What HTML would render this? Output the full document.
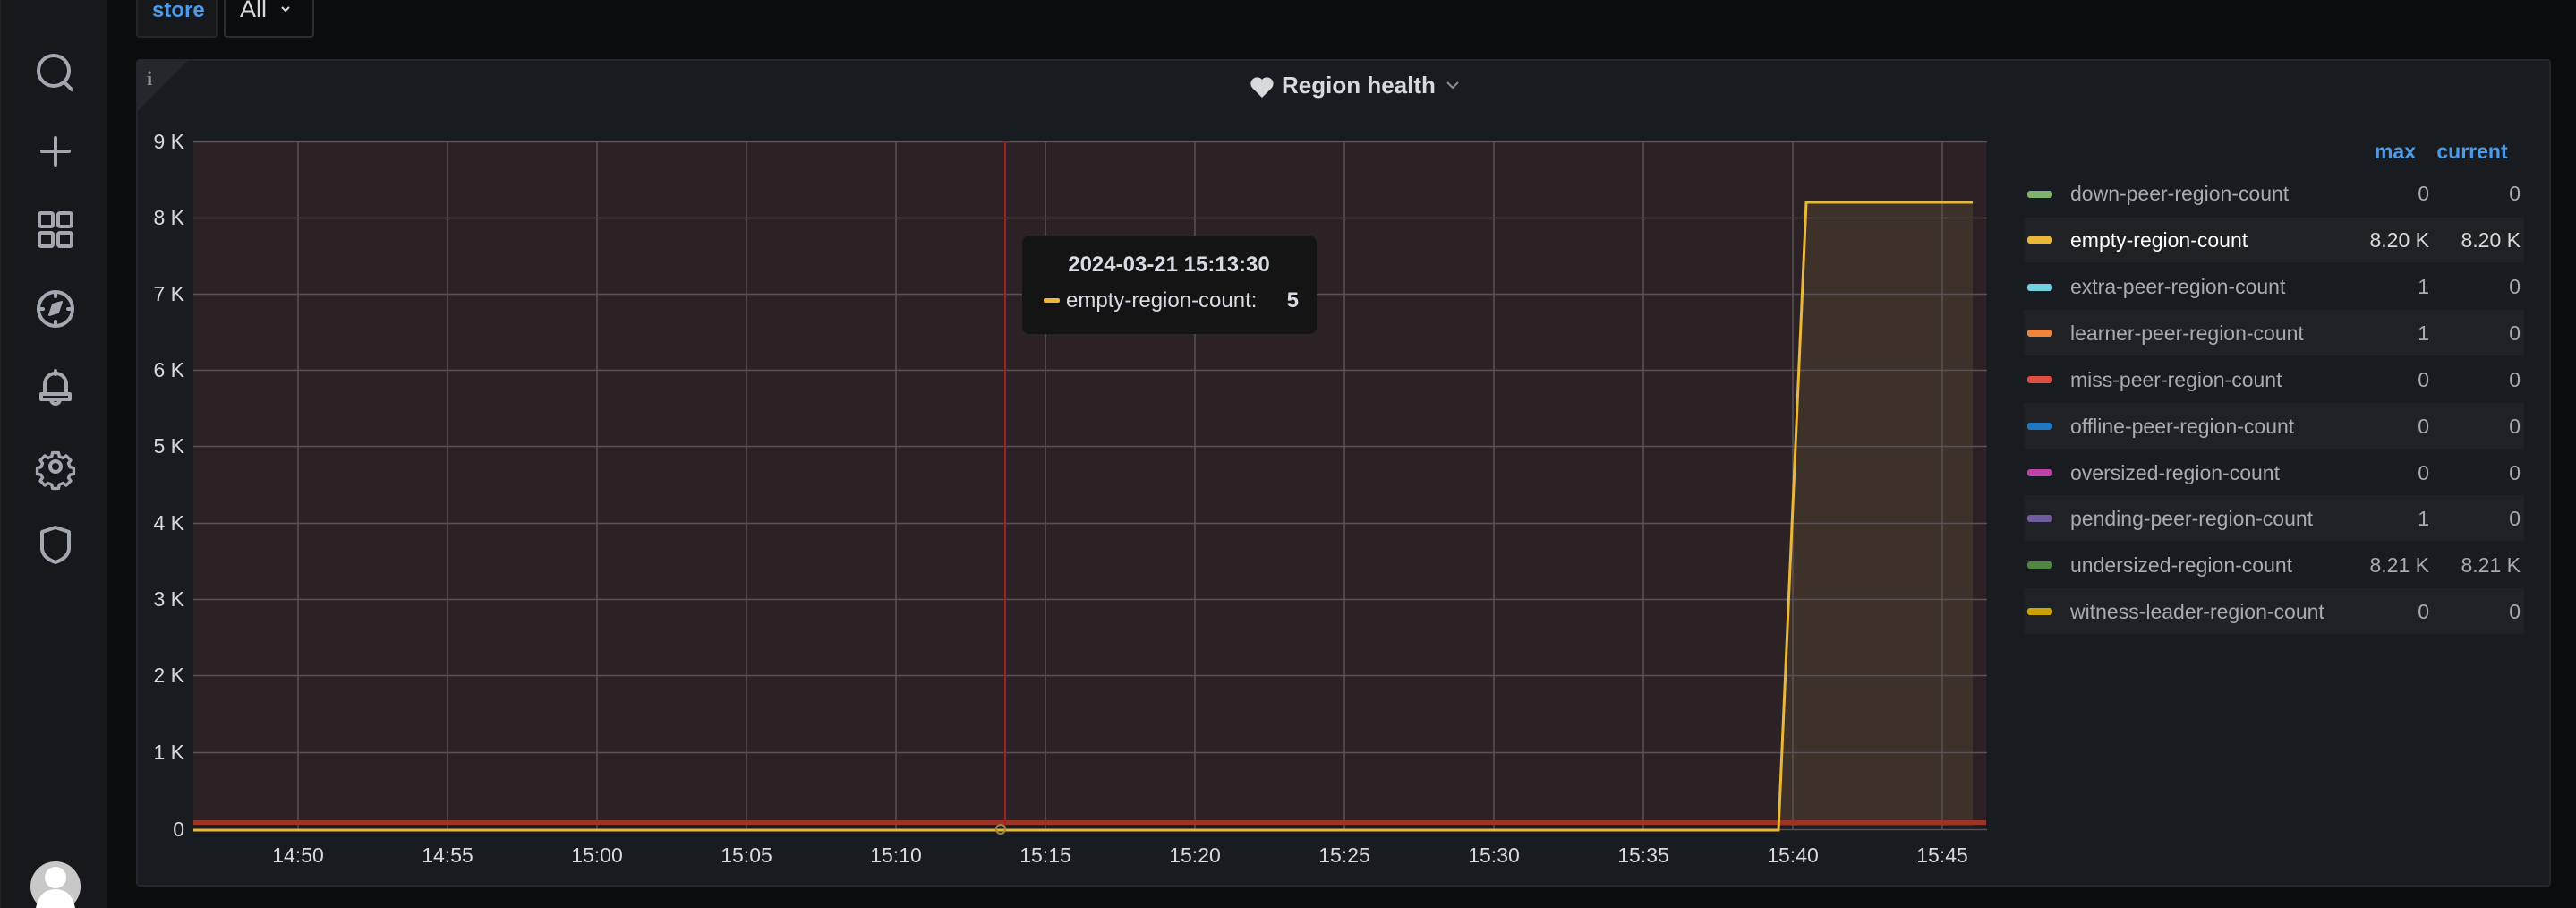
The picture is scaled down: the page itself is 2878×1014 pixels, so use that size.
<!DOCTYPE html>
<html><head><meta charset="utf-8"><style>
html,body{margin:0;padding:0;background:#0b0c0e;width:2878px;height:1014px;overflow:hidden;font-family:"Liberation Sans",sans-serif}
svg{position:absolute;left:0;top:0}
</style></head><body>
<svg width="2878" height="1014" viewBox="0 0 2878 1014" xmlns="http://www.w3.org/2000/svg" font-family="Liberation Sans, sans-serif">
<rect x="0" y="0" width="2878" height="1014" fill="#0b0c0e"/>
<rect x="0" y="0" width="120" height="1014" fill="#16181c"/>
<rect x="0" y="0" width="1" height="1014" fill="#222"/>
<g fill="none" stroke="#a3a7b0" stroke-width="4" stroke-linecap="round" stroke-linejoin="round">
 <circle cx="60" cy="79" r="17"/><line x1="72" y1="92" x2="80" y2="100"/>
 <line x1="62" y1="154" x2="62" y2="184"/><line x1="47" y1="169" x2="77" y2="169"/>
 <rect x="44" y="238" width="15" height="15" rx="2"/><rect x="65" y="238" width="15" height="15" rx="2"/>
 <rect x="44" y="260" width="15" height="15" rx="2"/><rect x="65" y="260" width="15" height="15" rx="2"/>
 <circle cx="62" cy="345" r="19"/><line x1="62" y1="326" x2="62" y2="331"/><line x1="62" y1="359" x2="62" y2="364"/><line x1="43" y1="345" x2="48" y2="345"/><line x1="76" y1="345" x2="81" y2="345"/>
 <path d="M55 352 L59 340 L69 337 L65 349 Z" fill="#a3a7b0" stroke-width="2"/>
 <path d="M62 414 L62 418 M50 440 L50 429 A12 12 0 0 1 74 429 L74 440 M46 440 L78 440 L78 446 L46 446 Z M57 446 A5 5 0 0 0 67 446"/>
 <circle cx="62" cy="521" r="6"/>
 <path d="M58 502 L66 502 L67 507 L72 509 L76 506 L82 512 L79 516 L81 521 L81 521 L86 522 L86 530 L81 531 L79 535 L82 539 L76 545 L72 542 L67 544 L66 549 L58 549 L57 544 L52 542 L48 545 L42 539 L45 535 L43 531 L38 530 L38 522 L43 521 L45 516 L42 512 L48 506 L52 509 L57 507 Z" transform="translate(62 525.5) scale(0.85) translate(-62 -525.5)"/>
 <path d="M47 594 L62 589 L77 594 L77 613 Q76 623 62 628 Q48 623 47 613 Z"/>
</g>
<circle cx="62" cy="990" r="28" fill="#c8c8c8"/>
<circle cx="62" cy="980" r="12" fill="#fff"/>
<path d="M40 1014 Q44 993 62 993 Q80 993 84 1014 Z" fill="#fff"/>
<rect x="153" y="-4" width="89" height="45" rx="3" fill="#16181c" stroke="#24262b" stroke-width="2"/>
<text x="170" y="19" font-size="24" font-weight="600" fill="#4c9be8">store</text>
<rect x="251" y="-4" width="99" height="45" rx="3" fill="#0b0c0e" stroke="#2c3032" stroke-width="2"/>
<text x="268" y="19" font-size="27" fill="#d8d9da">All</text>
<path d="M315 8 L319 12 L323 8" stroke="#d8d9da" stroke-width="2" fill="none"/>
<rect x="153" y="67" width="2696" height="922" rx="3" fill="#181b1f" stroke="#24262b" stroke-width="2"/>
<path d="M154 68 L210 68 L154 124 Z" fill="#25272c"/>
<text x="164" y="95" font-size="22" font-weight="bold" fill="#8e8e8e" font-family="Liberation Serif, serif">i</text>
<path d="M1410 109 L1399 98 A6.5 6.5 0 0 1 1410 89 A6.5 6.5 0 0 1 1421 98 Z" fill="#d8d9da"/>
<text x="1432" y="104" font-size="26" font-weight="bold" fill="#d8d9da">Region health</text>
<path d="M1617 92 L1623 98 L1629 92" stroke="#8e8e8e" stroke-width="2" fill="none"/>
<rect x="216" y="158" width="2003" height="764" fill="#2c2225"/>
<path d="M1987 922 L2018 226 L2204 226 L2204 922 Z" fill="#3d3129"/>
<g stroke="#5a5254" stroke-width="1.5">
 <line x1="216" y1="158.5" x2="2220" y2="158.5"/>
 <line x1="216" y1="243.5" x2="2220" y2="243.5"/>
 <line x1="216" y1="328.5" x2="2220" y2="328.5"/>
 <line x1="216" y1="413.5" x2="2220" y2="413.5"/>
 <line x1="216" y1="498.5" x2="2220" y2="498.5"/>
 <line x1="216" y1="584.5" x2="2220" y2="584.5"/>
 <line x1="216" y1="669.5" x2="2220" y2="669.5"/>
 <line x1="216" y1="754.5" x2="2220" y2="754.5"/>
 <line x1="216" y1="840.5" x2="2220" y2="840.5"/>
 <line x1="216" y1="926.5" x2="2220" y2="926.5"/>
 <line x1="333" y1="158" x2="333" y2="926"/><line x1="500" y1="158" x2="500" y2="926"/>
 <line x1="667" y1="158" x2="667" y2="926"/><line x1="834" y1="158" x2="834" y2="926"/>
 <line x1="1001" y1="158" x2="1001" y2="926"/><line x1="1168" y1="158" x2="1168" y2="926"/>
 <line x1="1335" y1="158" x2="1335" y2="926"/><line x1="1502" y1="158" x2="1502" y2="926"/>
 <line x1="1669" y1="158" x2="1669" y2="926"/><line x1="1836" y1="158" x2="1836" y2="926"/>
 <line x1="2003" y1="158" x2="2003" y2="926"/><line x1="2170" y1="158" x2="2170" y2="926"/>
</g>
<rect x="216" y="916" width="2003" height="5" fill="#9c3428"/>
<path d="M216 927 L1987 927 L2018 226 L2204 226" stroke="#eab839" stroke-width="3" fill="none"/>
<line x1="1123" y1="158" x2="1123" y2="926" stroke="#a3201c" stroke-width="2"/>
<circle cx="1118" cy="926" r="5" fill="none" stroke="#9c8a3a" stroke-width="2"/>
<g font-size="23" fill="#d8d9da" text-anchor="end">
 <text x="206" y="166">9 K</text><text x="206" y="251">8 K</text><text x="206" y="336">7 K</text>
 <text x="206" y="421">6 K</text><text x="206" y="506">5 K</text><text x="206" y="592">4 K</text>
 <text x="206" y="677">3 K</text><text x="206" y="762">2 K</text><text x="206" y="848">1 K</text>
 <text x="206" y="934">0</text>
</g>
<g font-size="23" fill="#d8d9da" text-anchor="middle">
 <text x="333" y="963">14:50</text><text x="500" y="963">14:55</text><text x="667" y="963">15:00</text>
 <text x="834" y="963">15:05</text><text x="1001" y="963">15:10</text><text x="1168" y="963">15:15</text>
 <text x="1335" y="963">15:20</text><text x="1502" y="963">15:25</text><text x="1669" y="963">15:30</text>
 <text x="1836" y="963">15:35</text><text x="2003" y="963">15:40</text><text x="2170" y="963">15:45</text>
</g>
<rect x="1142" y="263" width="329" height="110" rx="8" fill="#141414"/>
<text x="1306" y="303" font-size="24" font-weight="bold" fill="#d8dce2" text-anchor="middle">2024-03-21 15:13:30</text>
<rect x="1166" y="333" width="18" height="5" rx="2" fill="#eab839"/>
<text x="1191" y="343" font-size="24" fill="#d8dce2">empty-region-count:</text>
<text x="1451" y="343" font-size="24" font-weight="bold" fill="#d8dce2" text-anchor="end">5</text>
<text x="2676" y="177" font-size="23" font-weight="bold" fill="#4c9be8" text-anchor="middle">max</text>
<text x="2762" y="177" font-size="23" font-weight="bold" fill="#4c9be8" text-anchor="middle">current</text>
<g fill="#1f2125">
 <rect x="2261" y="243" width="559" height="50"/><rect x="2261" y="346" width="559" height="51"/>
 <rect x="2261" y="450" width="559" height="51"/><rect x="2261" y="553" width="559" height="51"/>
 <rect x="2261" y="657" width="559" height="51"/>
</g>
<g font-size="23" fill="#a8abb0">
 <rect x="2265" y="213" width="28" height="8" rx="3" fill="#7eb26d"/><text x="2313" y="224">down-peer-region-count</text><text x="2714" y="224" text-anchor="end">0</text><text x="2816" y="224" text-anchor="end">0</text>
 <rect x="2265" y="264" width="28" height="8" rx="3" fill="#eab839"/><text x="2313" y="276" fill="#ffffff">empty-region-count</text><text x="2714" y="276" text-anchor="end" fill="#d8d9da">8.20 K</text><text x="2816" y="276" text-anchor="end" fill="#d8d9da">8.20 K</text>
 <rect x="2265" y="317" width="28" height="8" rx="3" fill="#6ed0e0"/><text x="2313" y="328">extra-peer-region-count</text><text x="2714" y="328" text-anchor="end">1</text><text x="2816" y="328" text-anchor="end">0</text>
 <rect x="2265" y="368" width="28" height="8" rx="3" fill="#ef843c"/><text x="2313" y="380">learner-peer-region-count</text><text x="2714" y="380" text-anchor="end">1</text><text x="2816" y="380" text-anchor="end">0</text>
 <rect x="2265" y="420" width="28" height="8" rx="3" fill="#e24d42"/><text x="2313" y="432">miss-peer-region-count</text><text x="2714" y="432" text-anchor="end">0</text><text x="2816" y="432" text-anchor="end">0</text>
 <rect x="2265" y="472" width="28" height="8" rx="3" fill="#1f78c1"/><text x="2313" y="484">offline-peer-region-count</text><text x="2714" y="484" text-anchor="end">0</text><text x="2816" y="484" text-anchor="end">0</text>
 <rect x="2265" y="524" width="28" height="8" rx="3" fill="#ba43a9"/><text x="2313" y="536">oversized-region-count</text><text x="2714" y="536" text-anchor="end">0</text><text x="2816" y="536" text-anchor="end">0</text>
 <rect x="2265" y="575" width="28" height="8" rx="3" fill="#705da0"/><text x="2313" y="587">pending-peer-region-count</text><text x="2714" y="587" text-anchor="end">1</text><text x="2816" y="587" text-anchor="end">0</text>
 <rect x="2265" y="627" width="28" height="8" rx="3" fill="#508642"/><text x="2313" y="639">undersized-region-count</text><text x="2714" y="639" text-anchor="end">8.21 K</text><text x="2816" y="639" text-anchor="end">8.21 K</text>
 <rect x="2265" y="679" width="28" height="8" rx="3" fill="#cca300"/><text x="2313" y="691">witness-leader-region-count</text><text x="2714" y="691" text-anchor="end">0</text><text x="2816" y="691" text-anchor="end">0</text>
</g>
</svg>
</body></html>
